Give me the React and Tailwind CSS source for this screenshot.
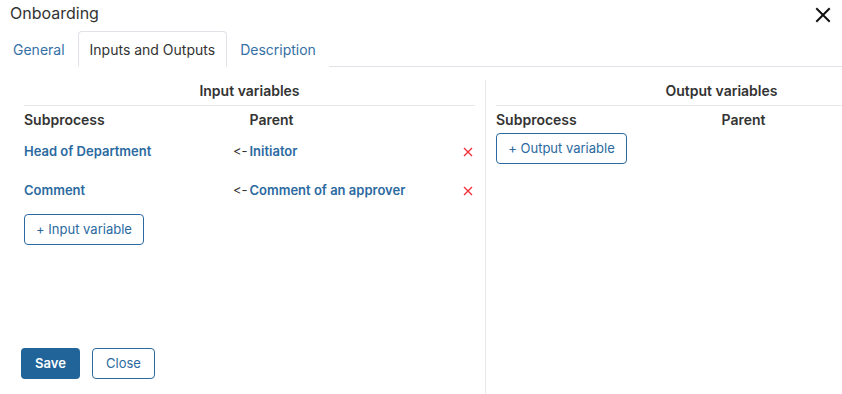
import React from "react";

const rows = [
  { sub: "Head of Department", parent: "Initiator" },
  { sub: "Comment", parent: "Comment of an approver" },
];

function CloseIcon() {
  return (
    <svg width="16" height="16" viewBox="0 0 16 16" fill="none" stroke="#111" strokeWidth="2" strokeLinecap="square">
      <path d="M2 2 L14 14 M14 2 L2 14" />
    </svg>
  );
}

function RemoveIcon() {
  return (
    <svg width="10" height="10" viewBox="0 0 10 10" fill="none" stroke="#f0303a" strokeWidth="1.4">
      <path d="M1 1 L9 9 M9 1 L1 9" />
    </svg>
  );
}

function VarPanel({ title, children }) {
  return (
    <div className="w-[451px] shrink-0">
      <div className="h-[22px] mt-[3px] flex items-center justify-center font-semibold text-[14px] text-[#333]">
        {title}
      </div>
      <div className="border-b border-[#e6e8ec] mt-[4px]" />
      <div className="grid grid-cols-2 h-[26px] items-center font-semibold text-[14px] text-[#333]">
        <div>Subprocess</div>
        <div>Parent</div>
      </div>
      {children}
    </div>
  );
}

export default function App() {
  return (
    <div
      className="w-[842px] h-[394px] overflow-hidden bg-white text-[#333] [font-feature-settings:'calt'_0]"
      style={{ fontFamily: "Inter, 'Noto Sans', sans-serif" }}
    >
      {/* header */}
      <div className="h-[31px] flex items-start justify-between pl-[10px] pr-[11px]">
        <div className="text-[16px] leading-[26px]">Onboarding</div>
        <button className="mt-[7px]">
          <CloseIcon />
        </button>
      </div>

      {/* tabs */}
      <div className="flex h-[36px]">
        <div className="px-3 border border-transparent flex items-center text-[14px] text-[#3470a6]">General</div>
        <div className="px-[11px] border border-[#dfe2e6] border-b-white rounded-t-[4px] flex items-center text-[14px] text-[#333]">
          Inputs and Outputs
        </div>
        <div className="px-3 border border-transparent flex items-center text-[14px] text-[#3470a6]">Description</div>
        <div className="flex-1 border-b border-[#dfe2e6]" />
      </div>

      {/* body */}
      <div className="flex pl-6 mt-[9px] h-[318px]">
        <div className="w-[451px] shrink-0 flex flex-col pb-[15px]">
          <VarPanel title="Input variables">
            {rows.map((r) => (
              <div key={r.sub} className="grid grid-cols-2 h-[39px] items-center text-[13px] font-semibold">
                <div className="flex justify-between items-center pr-[2px]">
                  <span className="text-[#2b6aa0]">{r.sub}</span>
                  <span className="text-[#333] font-normal">&lt;-</span>
                </div>
                <div className="flex justify-between items-center">
                  <span className="text-[#2b6aa0]">{r.parent}</span>
                  <span className="mr-[2px]">
                    <RemoveIcon />
                  </span>
                </div>
              </div>
            ))}
            <button className="mt-[4px] h-[31px] w-[120px] border border-[#2b6aa0] rounded-[4px] text-[13px] text-[#2b6aa0]">
              + Input variable
            </button>
          </VarPanel>
          <div className="mt-auto flex gap-3 -ml-[3px]">
            <button className="h-[31px] w-[59px] rounded-[4px] bg-[#21649a] text-white text-[13px] font-semibold">
              Save
            </button>
            <button className="h-[31px] w-[63px] rounded-[4px] border border-[#2b6aa0] text-[#2b6aa0] text-[13px]">
              Close
            </button>
          </div>
        </div>
        <div className="ml-[10px] mr-[10px] mt-[4px] border-l border-[#e6e8ec] shrink-0" />
        <VarPanel title="Output variables">
          <button className="mt-[1px] h-[31px] w-[131px] border border-[#2b6aa0] rounded-[4px] text-[13px] text-[#2b6aa0]">
            + Output variable
          </button>
        </VarPanel>
      </div>
    </div>
  );
}
